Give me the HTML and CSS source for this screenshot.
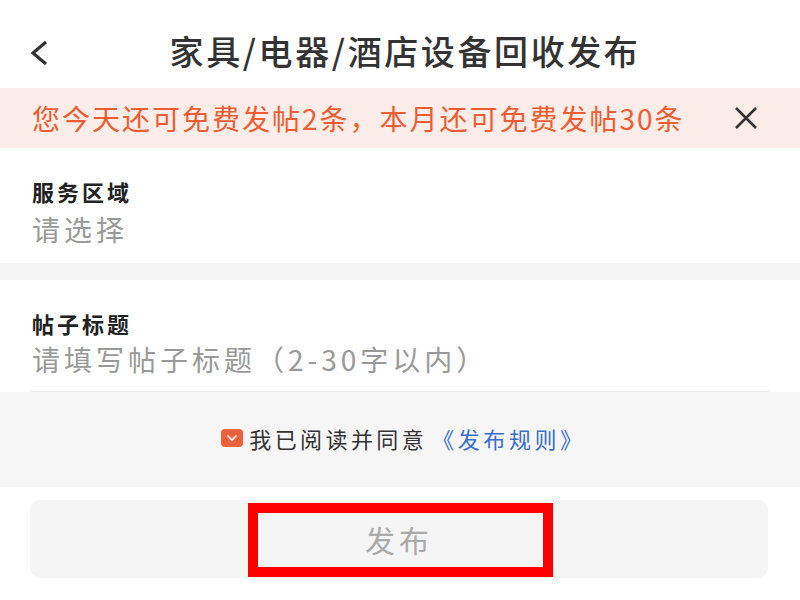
FILE: index.html
```html
<!DOCTYPE html>
<html lang="zh-CN">
<head>
  <meta charset="UTF-8">
  <title>家具/电器/酒店设备回收发布</title>
  <link rel="stylesheet" href="styles.css">
</head>
<body>

  <div class="header">
    <span class="back">
      <svg width="20" height="26" viewBox="0 0 20 26">
        <path d="M17 2 L4 13 L17 24" fill="none" stroke="#333" stroke-width="3.2"/>
      </svg>
    </span>
    <h1 class="title">家具/电器/酒店设备回收发布</h1>
  </div>

  <div class="notice">
    <span class="notice-text">您今天还可免费发帖2条，本月还可免费发帖30条</span>
    <span class="notice-close">
      <svg width="24" height="24" viewBox="0 0 24 24">
        <path d="M2 2 L22 22 M22 2 L2 22" fill="none" stroke="#333" stroke-width="2.6"/>
      </svg>
    </span>
  </div>

  <div class="field">
    <div class="field-label">服务区域</div>
    <div class="field-value">请选择</div>
  </div>

  <div class="gap"></div>

  <div class="field field-title">
    <div class="field-label">帖子标题</div>
    <div class="field-value">请填写帖子标题（2-30字以内）</div>
  </div>

  <div class="agree">
    <span class="check">
      <svg width="12" height="8" viewBox="0 0 12 8">
        <path d="M1.5 1.5 L6 6 L10.5 1.5" fill="none" stroke="#fff" stroke-width="1.6"/>
      </svg>
    </span>
    <span class="agree-text">我已阅读并同意</span>
    <a class="rules" href="#">《发布规则》</a>
  </div>

  <div class="footer">
    <button class="publish" type="button">发布</button>
    <div class="highlight"></div>
  </div>

</body>
</html>
```

FILE: styles.css
```css
body {
  margin: 0;
  width: 800px;
  height: 600px;
  overflow: hidden;
  background-color: #fff;
  font-family: "Noto Sans CJK SC", "Noto Sans", sans-serif;
}

.header {
  height: 88px;
  display: flex;
  align-items: center;
  justify-content: center;
  position: relative;
}

.back {
  position: absolute;
  left: 29px;
  top: 40px;
}

.title {
  margin: 14px 0 0 10px;
  font-size: 34px;
  font-weight: 500;
  letter-spacing: 2.6px;
  line-height: 40px;
  color: #333;
}

.notice {
  height: 60px;
  display: flex;
  align-items: center;
  justify-content: space-between;
  padding: 0 42px 0 32px;
  background-color: #fcede8;
}

.notice-text {
  font-size: 28px;
  letter-spacing: 2px;
  color: #ec5d35;
}

.notice-close {
  display: flex;
}

.field {
  height: 115px;
  padding: 30px 32px 0;
  box-sizing: border-box;
}

.field-label {
  font-size: 22px;
  font-weight: 700;
  letter-spacing: 3px;
  color: #222;
  line-height: 26px;
}

.field-value {
  margin-top: 7px;
  font-size: 28px;
  letter-spacing: 4px;
  color: #999;
  line-height: 36px;
}

.gap {
  height: 17px;
  background-color: #f5f5f5;
}

.field-title {
  height: 112px;
  padding-top: 30px;
  border-bottom: 1px solid #ececec;
  margin: 0 30px;
  padding-left: 2px;
  padding-right: 2px;
}

.field-title .field-value {
  margin-top: 5px;
}

.agree {
  height: 95px;
  display: flex;
  align-items: center;
  justify-content: center;
  background-color: #f6f6f6;
  padding-left: 7px;
  padding-bottom: 3px;
  box-sizing: border-box;
}

.check {
  width: 22px;
  height: 18px;
  border-radius: 4px;
  background-color: #e9613d;
  display: flex;
  align-items: center;
  justify-content: center;
  margin-right: 6px;
}

.agree-text {
  font-size: 22px;
  letter-spacing: 3.4px;
  color: #333;
}

.rules {
  font-size: 22px;
  letter-spacing: 3.6px;
  color: #3a6fc8;
  text-decoration: none;
  margin-left: 5px;
}

.footer {
  padding: 13px 32px 0 30px;
  position: relative;
}

.publish {
  width: 100%;
  height: 78px;
  border: none;
  border-radius: 10px;
  background-color: #f5f5f5;
  font-family: "Noto Sans CJK SC", sans-serif;
  font-size: 30px;
  letter-spacing: 4px;
  color: #aaa;
}

.highlight {
  position: absolute;
  left: 248px;
  top: 16px;
  width: 305px;
  height: 74px;
  border: 10px solid #ff0000;
  box-sizing: border-box;
}
```
